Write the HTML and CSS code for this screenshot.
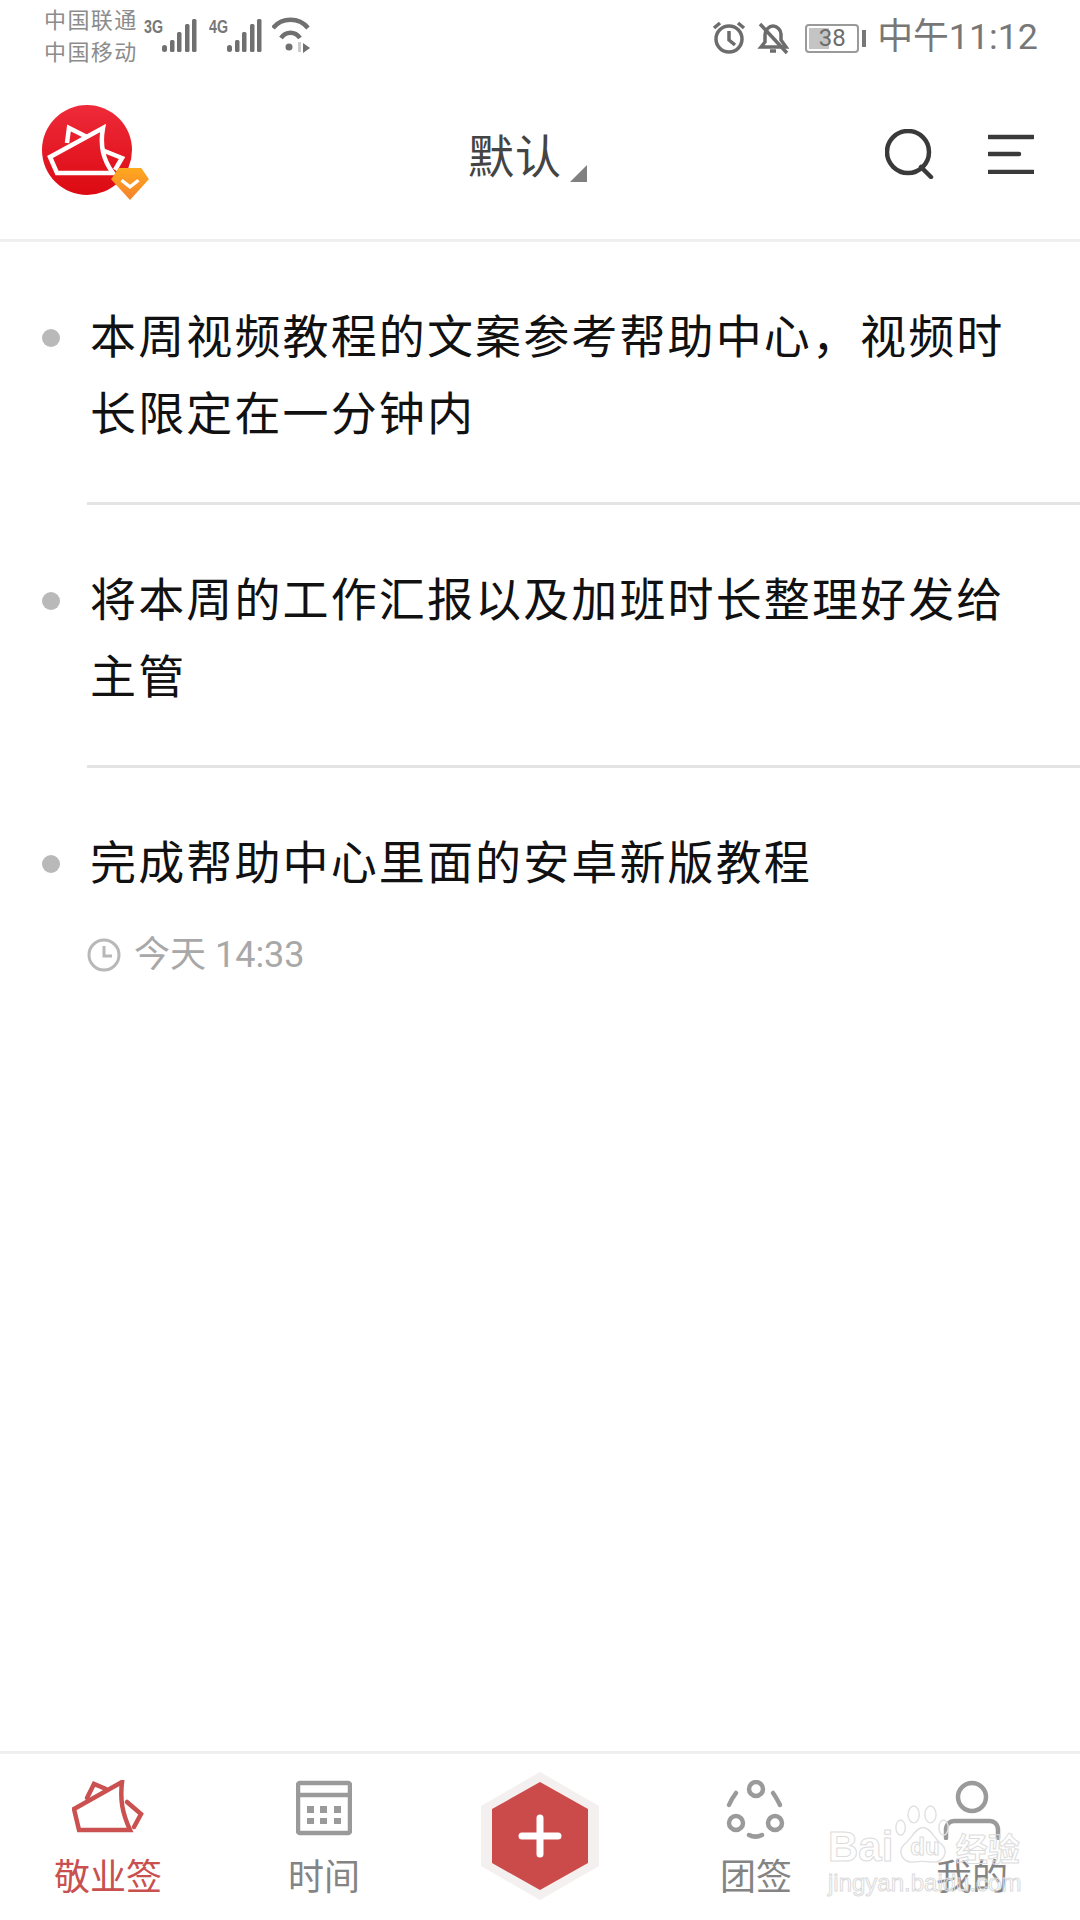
FILE: index.html
```html
<!DOCTYPE html>
<html lang="zh">
<head>
<meta charset="utf-8">
<title>敬业签</title>
<link rel="stylesheet" href="styles.css">
</head>
<body>
<div class="page">
  <div class="statusbar">
    <div class="status-left">
      <div class="carriers"><span>中国联通</span><span>中国移动</span></div>
      <svg class="sig" width="56" height="40" viewBox="0 0 56 40"><text x="0" y="19" class="net" textLength="19" lengthAdjust="spacingAndGlyphs">3G</text><g class="bars"><rect x="18" y="31" width="5" height="7" rx="2.5"/><rect x="26" y="26" width="4.5" height="12" rx="1.5"/><rect x="33" y="18" width="4.5" height="20" rx="1.5"/><rect x="41" y="10" width="4.5" height="28" rx="1.5"/><rect x="48" y="5" width="4.5" height="33" rx="1.5"/></g></svg>
      <svg class="sig" width="56" height="40" viewBox="0 0 56 40"><text x="0" y="19" class="net" textLength="19" lengthAdjust="spacingAndGlyphs">4G</text><g class="bars"><rect x="18" y="31" width="5" height="7" rx="2.5"/><rect x="26" y="26" width="4.5" height="12" rx="1.5"/><rect x="33" y="18" width="4.5" height="20" rx="1.5"/><rect x="41" y="10" width="4.5" height="28" rx="1.5"/><rect x="48" y="5" width="4.5" height="33" rx="1.5"/></g></svg>
      <svg class="wifi" width="42" height="40" viewBox="0 0 42 40"><path d="M1 14 C10 3 27 3 36 14"/><path d="M9 24 C14 17 23 17 28 24"/><circle cx="17" cy="33" r="3.5" class="fill"/><rect x="26" y="28" width="3" height="10" class="lite"/><path d="M31 29 l7 5 -7 5z" class="fill"/></svg>
    </div>
    <div class="status-right">
      <svg class="alarm" width="36" height="36" viewBox="0 0 36 36"><circle cx="18" cy="19" r="13"/><path d="M18 11 v9 l6 5"/><path d="M3 8 L9 3"/><path d="M33 8 L27 3"/></svg>
      <svg class="bell" width="34" height="36" viewBox="0 0 34 36"><path d="M5 27 L9 22 V15 C9 10 13 6 17 6 C21 6 25 10 25 14 V20 L30 27 Z"/><path d="M14 31 h6"/><path d="M4 4 L31 33" class="strike"/></svg>
      <div class="battery"><div class="battery-body"><div class="battery-fill"></div><span class="battery-num">38</span></div><div class="battery-cap"></div></div>
      <span class="clock-text">中午11:12</span>
    </div>
  </div>

  <header class="topbar">
    <div class="logo">
      <svg width="92" height="92" viewBox="0 0 92 92" class="logo-svg">
        <defs><linearGradient id="lg" x1="0" y1="0" x2="0" y2="1"><stop offset="0" stop-color="#ee2a3a"/><stop offset="1" stop-color="#dc0a12"/></linearGradient></defs>
        <circle cx="46" cy="46" r="45" fill="url(#lg)"/>
        <g class="logo-lines"><path d="M9 53 L62 24 C59 40 62 56 72 69 H16 Z"/><path d="M26 39 L28 24 L46 33"/><path d="M61 46 L81 54 L74 66"/></g>
      </svg>
      <svg width="40" height="34" viewBox="0 0 42 36" class="badge">
        <defs><linearGradient id="bg" x1="0" y1="0" x2="0" y2="1"><stop offset="0" stop-color="#ffa91f"/><stop offset="1" stop-color="#f5812b"/></linearGradient></defs>
        <path d="M9 1 H33 L41 13 L21 35 L1 13 Z" fill="url(#bg)"/><path d="M12 14 L21 21 L30 14" fill="none" stroke="#fff" stroke-width="3.5"/>
      </svg>
    </div>
    <div class="title"><span>默认</span><i class="caret"></i></div>
    <div class="actions">
      <svg width="50" height="50" viewBox="0 0 50 50" class="act"><circle cx="23" cy="23" r="21"/><path d="M36 38 L46 48"/></svg>
      <svg width="46" height="40" viewBox="0 0 46 40" class="act"><path d="M1 3 H45"/><path d="M1 20 H31"/><path d="M1 38 H45"/></svg>
    </div>
  </header>

  <main class="list">
    <article class="item">
      <div class="marker"><i class="dot"></i></div>
      <div class="body"><p class="text">本周视频教程的文案参考帮助中心，视频时长限定在一分钟内</p></div>
    </article>
    <article class="item">
      <div class="marker"><i class="dot"></i></div>
      <div class="body"><p class="text">将本周的工作汇报以及加班时长整理好发给主管</p></div>
    </article>
    <article class="item item-last">
      <div class="marker"><i class="dot"></i></div>
      <div class="body">
        <p class="text">完成帮助中心里面的安卓新版教程</p>
        <div class="when">
          <svg width="34" height="34" viewBox="0 0 34 34" class="when-icon"><circle cx="17" cy="17" r="15"/><path d="M17 8 V18 H25"/></svg>
          <span>今天 14:33</span>
        </div>
      </div>
    </article>
  </main>

  <nav class="tabs">
    <a class="tab tab-on">
      <svg width="72" height="56" viewBox="0 0 72 56" class="tab-icon red"><path d="M2 29 L50 2 C48 20 50 32 58 50 H7 Z"/><path d="M15 18 L22 4 L34 9"/><path d="M55 22 L69 34 L62 47"/></svg>
      <span>敬业签</span>
    </a>
    <a class="tab">
      <svg width="56" height="56" viewBox="0 0 56 56" class="tab-icon"><rect x="2" y="3" width="52" height="50" rx="2"/><path d="M2 15 H54"/><g class="cells"><rect x="11" y="26" width="7" height="7"/><rect x="24" y="26" width="7" height="7"/><rect x="38" y="26" width="7" height="7"/><rect x="11" y="38" width="7" height="6"/><rect x="24" y="38" width="7" height="6"/><rect x="38" y="38" width="7" height="6"/></g></svg>
      <span>时间</span>
    </a>
    <a class="tab tab-add">
      <svg width="120" height="128" viewBox="0 0 120 128"><path d="M60 0 L119 34 V94 L60 128 L1 94 V34 Z" fill="#f3f0ef"/><path d="M60 10 L108 37 V91 L60 118 L12 91 V37 Z" fill="#cb4b4b"/><path d="M42 64 H78 M60 46 V82" stroke="#fff" stroke-width="7" stroke-linecap="round"/></svg>
    </a>
    <a class="tab">
      <svg width="60" height="60" viewBox="0 0 60 60" class="tab-icon"><circle cx="30" cy="9" r="7"/><circle cx="10" cy="43" r="7"/><circle cx="49" cy="43" r="7"/><path d="M3 25 C5 20 7 17 10 13"/><path d="M47 13 C50 17 52 21 54 25"/><path d="M23 55 C27 57 32 57 36 55"/></svg>
      <span>团签</span>
    </a>
    <a class="tab">
      <svg width="60" height="60" viewBox="0 0 60 60" class="tab-icon"><circle cx="30" cy="17" r="14"/><path d="M4 58 V50 C4 44 8 41 12 41 H48 C52 41 56 44 56 50 V58"/></svg>
      <span>我的</span>
    </a>
    <div class="watermark">
      <svg class="paw" width="56" height="64" viewBox="0 0 60 64"><ellipse cx="6" cy="24" rx="5" ry="8"/><ellipse cx="20" cy="10" rx="6" ry="9"/><ellipse cx="38" cy="10" rx="6" ry="9"/><ellipse cx="52" cy="24" rx="5" ry="8"/><path d="M30 24 C38 24 42 36 50 42 C58 50 52 62 40 61 C32 60 26 60 20 61 C8 62 2 50 10 42 C18 36 22 24 30 24Z"/></svg>
      <div class="wm-top"><span class="wm-bai">Bai</span><span class="wm-du">du</span><span class="wm-jy">经验</span></div>
      <div class="wm-url">jingyan.baidu.com</div>
    </div>
  </nav>
</div>
</body>
</html>
```

FILE: styles.css
```css
* { box-sizing: border-box; }
html, body { margin: 0; padding: 0; background: #fff; }
body { font-family: Roboto, "Noto Sans CJK SC", sans-serif; }
svg { display: block; }
.page { width: 1080px; height: 1920px; display: flex; flex-direction: column; overflow: hidden; }

.statusbar { height: 75px; display: flex; justify-content: space-between; padding: 5px 42px 0 44px; }
.status-left { display: flex; align-items: flex-start; }
.carriers { display: flex; flex-direction: column; font-size: 22px; line-height: 32px; color: #8c8c8c; letter-spacing: 1.4px; width: 100px; }
.sig { margin-top: 9px; margin-right: 9px; }
.net { font: 700 18px "Liberation Sans", sans-serif; fill: #777; }
.bars rect { fill: #707070; }
.wifi { margin-top: 9px; margin-left: -2px; }
.wifi path { fill: none; stroke: #707070; stroke-width: 4.5; }
.wifi .fill { fill: #707070; stroke: none; }
.wifi .lite { fill: #ccc; }

.status-right { display: flex; align-items: center; height: 62px; padding-top: 4px; }
.alarm { margin-right: 9px; }
.alarm circle, .alarm path { fill: none; stroke: #6c6c6c; stroke-width: 3.5; }
.bell { margin-right: 15px; }
.bell path { fill: none; stroke: #6c6c6c; stroke-width: 3.5; }
.battery { display: flex; align-items: center; margin-right: 11px; }
.battery-body { position: relative; width: 54px; height: 29px; border: 2px solid #9a9a9a; border-radius: 4px; display: flex; align-items: center; justify-content: center; }
.battery-fill { position: absolute; left: 2px; top: 2px; bottom: 2px; width: 20px; background: #c4c4c4; }
.battery-num { position: relative; font-size: 24px; color: #6c6c6c; line-height: 1; }
.battery-cap { width: 4px; height: 17px; margin-left: 3px; background: #777; }
.clock-text { font-size: 35.8px; color: #777; line-height: 1; }

.topbar { height: 167px; border-bottom: 3px solid #efefef; display: flex; align-items: center; justify-content: space-between; padding: 0 46px 6px 41px; position: relative; }
.logo { position: relative; width: 108px; height: 100px; }
.logo-svg { position: absolute; left: 0; top: 0; }
.logo-lines path { fill: none; stroke: #fff; stroke-width: 4.5; stroke-linejoin: miter; }
.badge { position: absolute; left: 69px; top: 63px; }
.title { position: absolute; left: 468px; top: 50px; display: flex; align-items: flex-end; }
.title span { font-size: 46px; line-height: 64px; color: #444; letter-spacing: 1px; }
.caret { width: 0; height: 0; margin: 0 0 7px 8px; border-style: solid; border-width: 0 0 17px 17px; border-color: transparent transparent #808080 transparent; }
.actions { display: flex; align-items: center; gap: 53px; }
.act { fill: none; stroke: #3a3a3a; stroke-width: 4.5; stroke-linecap: round; }

.list { flex: 1; }
.item { display: flex; }
.marker { width: 87px; flex: none; padding: 87px 0 0 42px; }
.dot { display: block; width: 18px; height: 18px; border-radius: 50%; background: #b9b9b9; }
.body { flex: 1; padding: 57px 60px 49px 3px; border-bottom: 3px solid #e4e4e4; }
.item-last .body { border-bottom: 0; }
.text { margin: 0; font-size: 46px; line-height: 77px; letter-spacing: 2.13px; color: #111; }
.when { display: flex; align-items: center; margin-top: 29px; color: #a8a8a8; font-size: 36px; line-height: 48px; margin-left: -3px; }
.when-icon { margin-right: 13px; }
.when-icon circle, .when-icon path { fill: none; stroke: #b8b8b8; stroke-width: 3; }

.tabs { height: 169px; border-top: 3px solid #efefef; display: grid; grid-template-columns: repeat(5, 216px); position: relative; }
.tab { display: flex; flex-direction: column; align-items: center; justify-content: flex-start; height: 100%; color: #848484; font-size: 36px; line-height: 48px; padding-top: 26px; }
.tab span { margin-top: auto; margin-bottom: 18px; }
.tab-on { color: #c8504f; }
.tab-add { padding-top: 18px; }
.tab-icon { fill: none; stroke: #9a9a9a; stroke-width: 4.5; stroke-linejoin: round; stroke-linecap: round; }
.tab-icon .cells rect { fill: #9a9a9a; stroke: none; }
.tab-icon.red { stroke: #cb5150; stroke-linejoin: miter; }

.watermark { position: absolute; left: 828px; top: 49px; width: 200px; height: 100px; pointer-events: none; }
.paw { position: absolute; left: 67px; top: 0; fill: none; stroke: #e0e0e0; stroke-width: 1.5; }
.wm-top { position: absolute; left: 0; top: 19px; display: flex; align-items: center; font: 700 42px/50px "Liberation Sans", sans-serif; color: transparent; -webkit-text-stroke: 1px #dcdcdc; }
.wm-du { font-size: 24px; margin-left: 17px; margin-right: 16px; }
.wm-jy { font-family: "Noto Sans CJK SC", sans-serif; font-size: 32px; }
.wm-url { position: absolute; left: 0; top: 65px; font: 400 24px/30px "Liberation Sans", sans-serif; color: transparent; -webkit-text-stroke: 1px #dcdcdc; white-space: nowrap; }
```
